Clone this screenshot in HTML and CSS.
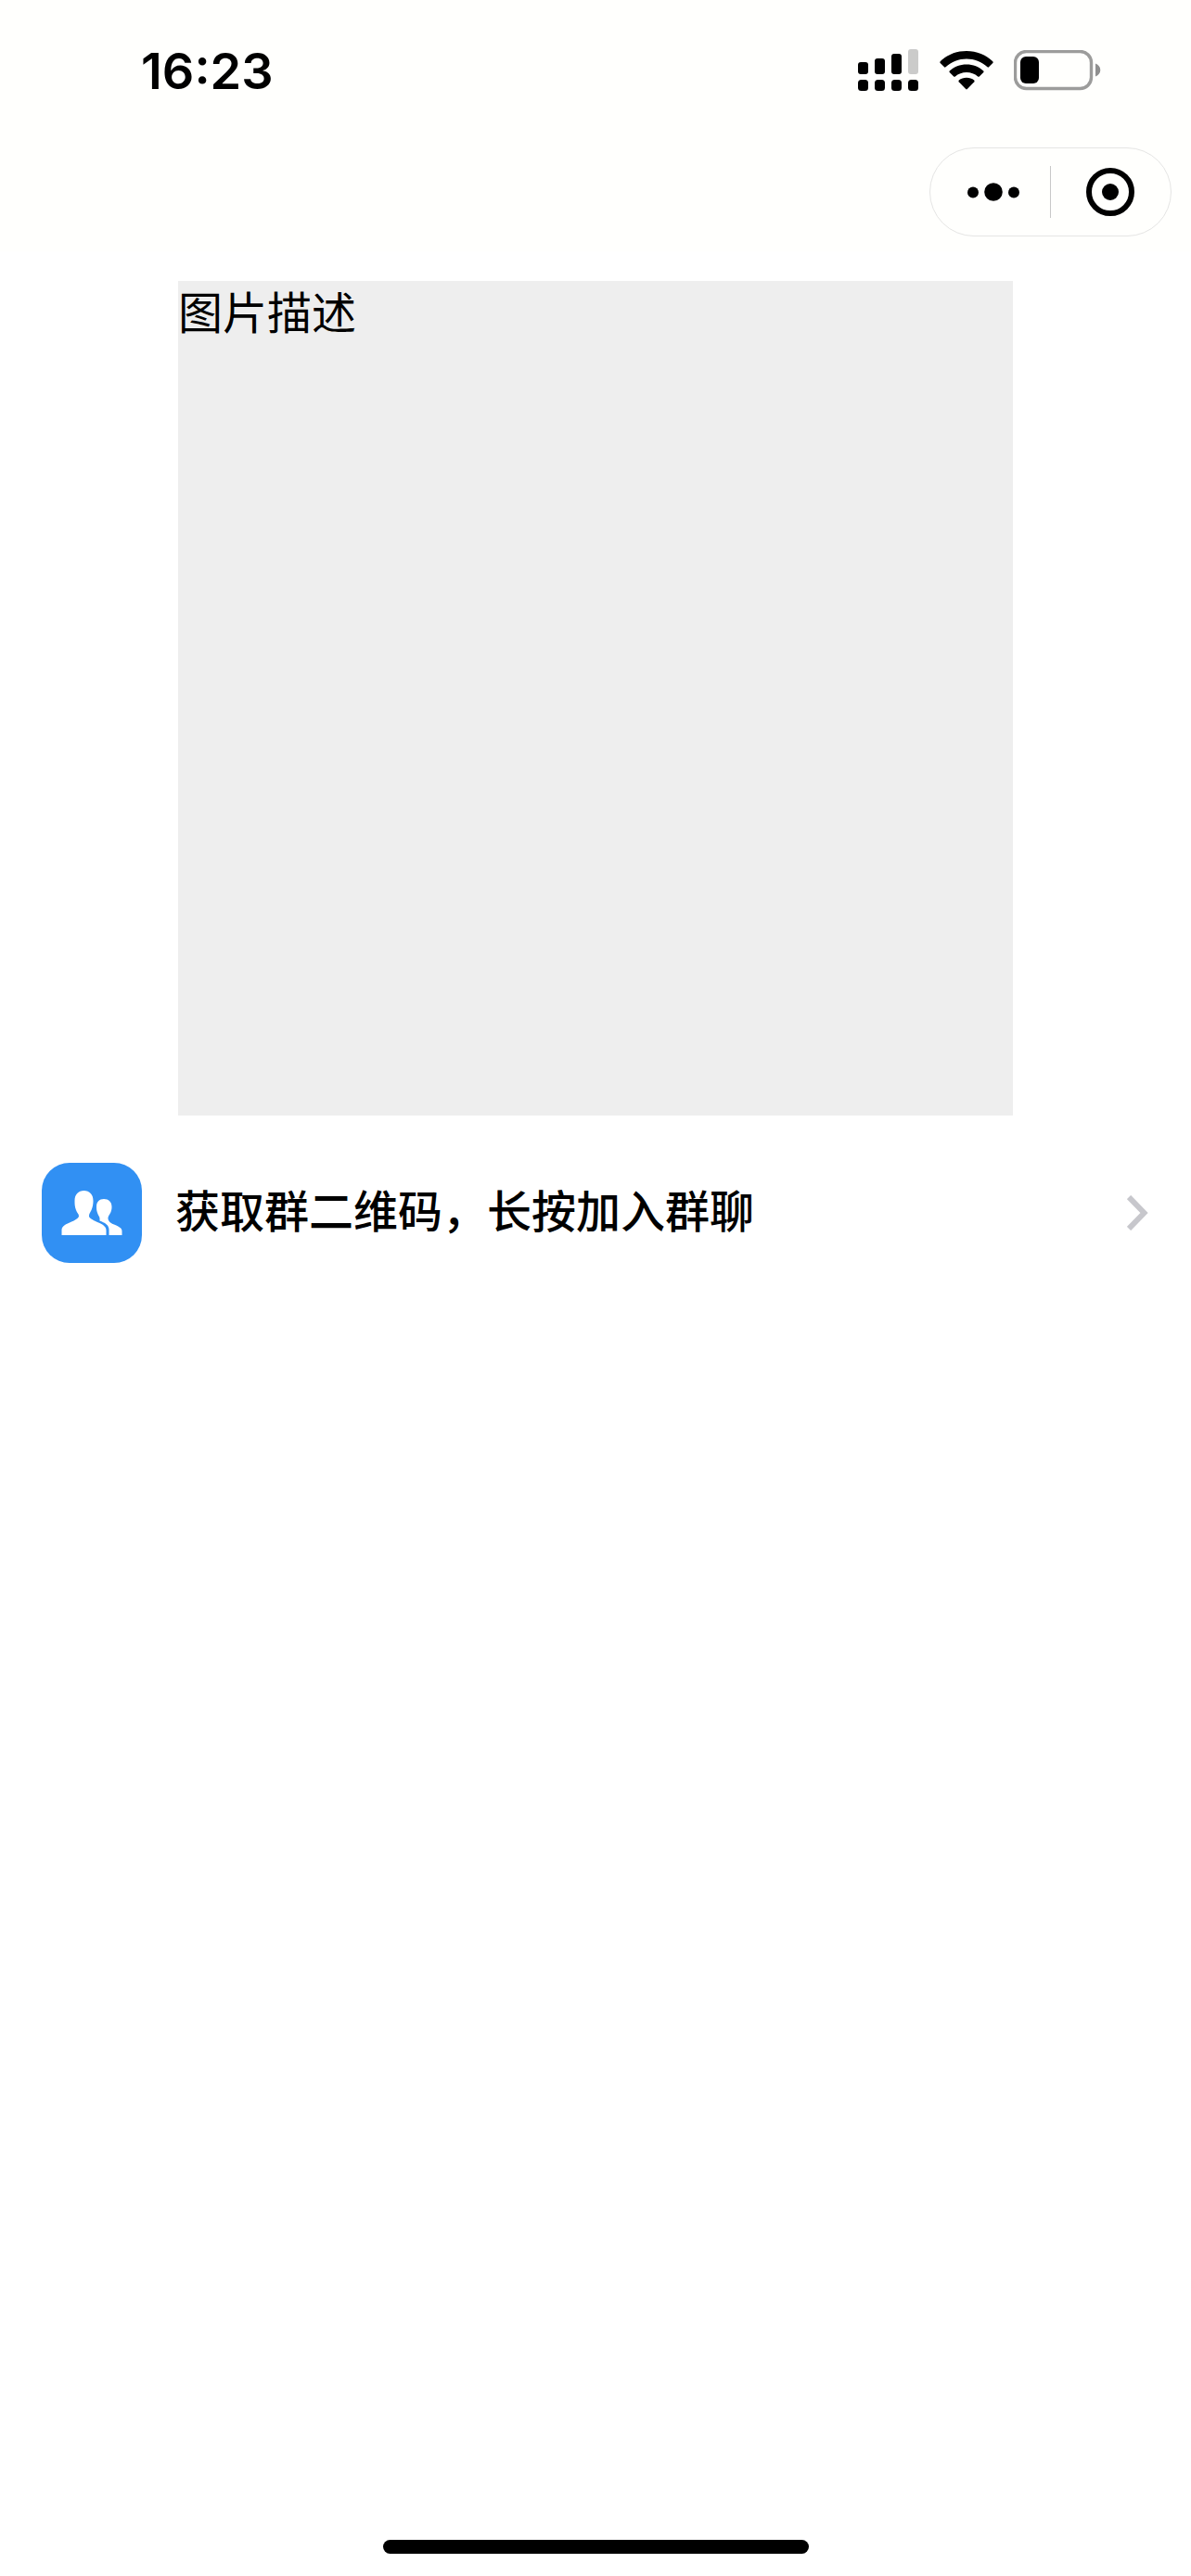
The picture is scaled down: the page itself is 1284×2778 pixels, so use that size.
FILE: index.html
```html
<!DOCTYPE html>
<html lang="zh-CN">

<head>
    <meta charset="UTF-8">
    <meta name="viewport" content="width=device-width, initial-scale=1.0">
    <title>群聊</title>
    <link rel="stylesheet" href="styles.css">
</head>

<body>
    <header class="header">
        <div class="status-bar">
            <span class="time">16:23</span>
            <div class="status-icons">
                <svg width="66" height="46" viewBox="0 0 66 46">
                    <rect x="0" y="14" width="11" height="13" rx="3" />
                    <rect x="18" y="10" width="11" height="17" rx="3" />
                    <rect x="36" y="5" width="11" height="22" rx="3" />
                    <rect x="54" y="0" width="11" height="27" rx="3" fill="#cbcbca" />
                    <rect x="0" y="33" width="11" height="12" rx="3.5" />
                    <rect x="18" y="33" width="11" height="12" rx="3.5" />
                    <rect x="36" y="33" width="11" height="12" rx="3.5" />
                    <rect x="54" y="33" width="11" height="12" rx="3.5" />
                </svg>
                <svg width="58" height="42" viewBox="0 0 58 42">
                    <path d="M29 0C40 0 50 4 57.300 11.300Q58 12.200 57.300 13L53 17.300Q52.300 18 51.500 17.300C45 11.500 37.500 8.600 29 8.600C20.500 8.600 13 11.500 6.500 17.300Q5.700 18 5 17.300L.7 13Q0 12.200 .7 11.300C8 4 18 0 29 0Z" />
                    <path d="M29 14.500C36 14.500 42.500 17 47.300 21.500Q48 22.300 47.300 23L42.800 27.500Q42 28.200 41.200 27.500C38 24.700 33.500 23 29 23C24.500 23 20 24.700 16.800 27.500Q16 28.200 15.200 27.500L10.700 23Q10 22.300 10.700 21.500C15.500 17 22 14.500 29 14.500Z" />
                    <path d="M29 28.800C32 28.800 35 29.800 37.200 31.600Q38 32.400 37.300 33.200L29.800 41Q29 41.800 28.200 41L20.700 33.200Q20 32.400 20.800 31.600C23 29.800 26 28.800 29 28.800Z" />
                </svg>
                <svg width="94" height="44" viewBox="0 0 94 44">
                    <rect x="1.500" y="1.500" width="82" height="40" rx="12" fill="none" stroke="#9c9c9b" stroke-width="3.400" />
                    <rect x="7" y="7" width="20" height="29" rx="6" />
                    <path d="M88 14.500C95 17 95 26 88 28.500Z" fill="#8f8f8f" />
                </svg>
            </div>
        </div>
        <div class="nav-bar">
            <div class="capsule">
                <button class="capsule-button" aria-label="更多">
                    <svg width="56" height="20" viewBox="0 0 56 20">
                        <circle cx="6" cy="10.500" r="6" />
                        <circle cx="28" cy="10" r="9.800" />
                        <circle cx="50" cy="10.500" r="6" />
                    </svg>
                </button>
                <button class="capsule-button" aria-label="关闭">
                    <svg width="52" height="52" viewBox="0 0 52 52">
                        <circle cx="26" cy="26" r="23" fill="none" stroke="#000" stroke-width="6" />
                        <circle cx="26" cy="26" r="9" />
                    </svg>
                </button>
            </div>
        </div>
    </header>

    <main class="content">
        <div class="picture">图片描述</div>
        <a class="group-link" href="#">
            <svg class="group-icon" width="108" height="108" viewBox="0 0 108 108">
                <path d="M21.500 78V73C21.500 69 24 67 30 64.500C36 62 40 59.500 40 57.500C40 55 38 54 37 51C35.500 47 35.500 44 35.500 41C35.500 34 39.500 30 45.500 30C51.500 30 55.500 34 55.500 41C55.500 44 55 48 53.500 51C52 54 51 55 51 57.500C51 59.500 54.500 61.500 60 64C67 67 69.500 69 69.500 73V78Z" />
                <path d="M62.500 62.500V60C62.500 58 61 57 60 54C59 51 59 49.500 59 47.500C59 42 62 39 67 39C72 39 75.500 42 75.500 47.500C75.500 50 75 52.500 73.500 55C72 57.500 71.500 58 71.500 60C71.500 62.500 74 65 78 66.500C85 69.500 86.500 71 86.500 74V78H72.500V72C72.500 67 68 64.500 62.500 62.500Z" />
            </svg>
            <span class="group-text">获取群二维码，长按加入群聊</span>
            <svg class="arrow" width="24" height="38" viewBox="0 0 24 38">
                <path d="M2 2L18.500 19L2 36" />
            </svg>
        </a>
    </main>

    <div class="home-indicator"></div>
</body>

</html>
```

FILE: styles.css
```css
* {
    box-sizing: border-box;
}

body {
    margin: 0;
    min-height: 100vh;
    display: flex;
    flex-direction: column;
    background-color: #fff;
    color: #000;
    font-family: "Noto Sans CJK SC", sans-serif;
    font-size: 48px;
    line-height: 62px;
}

.header {
    background-color: #fffffd;
}

.status-bar {
    display: flex;
    justify-content: space-between;
    align-items: center;
    height: 152px;
    padding: 0 97px 0 152px;
}

.time {
    padding-top: 2px;
    font-family: Inter, sans-serif;
    font-size: 54px;
    font-weight: 600;
}

.status-icons {
    display: flex;
    align-items: center;
    gap: 22px;
}

.nav-bar {
    display: flex;
    justify-content: flex-end;
    padding: 7px 21px 16px;
}

.capsule {
    display: flex;
    align-items: center;
    width: 261px;
    height: 96px;
    border: 1px solid #e5e5e4;
    border-radius: 48px;
}

.capsule-button {
    width: 50%;
    display: flex;
    justify-content: center;
    align-items: center;
    height: 56px;
    padding: 0;
    border: none;
    background: none;
    cursor: pointer;
}

.capsule-button:first-child {
    padding-left: 8px;
    border-right: 1px solid #c8c8c8;
}

.content {
    flex: 1;
    padding-top: 32px;
}

.picture {
    width: 900px;
    max-width: 100%;
    height: 900px;
    margin: 0 auto;
    background-color: #eee;
}

.group-link {
    display: flex;
    align-items: center;
    margin-top: 51px;
    padding: 0 45px;
    color: #000;
    text-decoration: none;
}

.group-icon {
    flex-shrink: 0;
    border-radius: 30px;
    background-color: #3190f3;
    fill: #fff;
}

.group-text {
    flex: 1;
    margin-left: 36px;
    padding-bottom: 10px;
    font-weight: 500;
}

.arrow {
    fill: none;
    stroke: #c7c7cc;
    stroke-width: 6;
}

.home-indicator {
    width: 459px;
    height: 15px;
    margin: 0 auto 24px;
    border-radius: 8px;
    background-color: #000;
}
```
